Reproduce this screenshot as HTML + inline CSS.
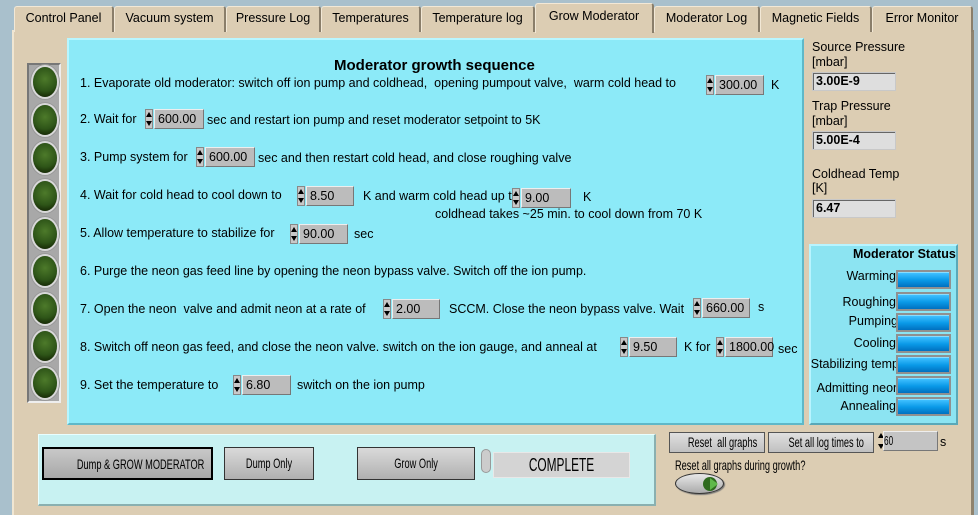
<!DOCTYPE html>
<html><head><meta charset="utf-8"><style>
*{margin:0;padding:0;box-sizing:border-box}
body{width:978px;height:515px;overflow:hidden;background:#a9c0cc;font-family:"Liberation Sans",sans-serif;font-size:12.5px;color:#000;position:relative}
.a{position:absolute;white-space:nowrap}
.tab{position:absolute;top:6px;height:26px;background:#dccdb3;border:1px solid #f2e8d6;border-right:2px solid #8a7e6a;border-bottom:none;border-radius:3px 3px 0 0;text-align:center;line-height:22px;font-size:12.5px}
.panel{position:absolute;left:12px;top:30px;width:962px;height:485px;background:#dccdb3;border-left:2px solid #f0e6d2;border-right:3px solid #8f836e}
.cy{position:absolute;left:67px;top:38px;width:737px;height:387px;background:#8ceaf8;border-top:2px solid #b8f6ff;border-left:2px solid #b8f6ff;border-right:2px solid #5fb8c8;border-bottom:2px solid #5fb8c8}
.num{position:absolute;height:20px}
.num .sp{position:absolute;left:0;top:0;width:8px;height:20px;background:#c8c8c8;border:1px solid #888}
.num .sp:before{content:"";position:absolute;left:0px;top:2px;border-left:3px solid transparent;border-right:3px solid transparent;border-bottom:5px solid #000}
.num .sp:after{content:"";position:absolute;left:0px;bottom:2px;border-left:3px solid transparent;border-right:3px solid transparent;border-top:5px solid #000}
.num .bx{position:absolute;left:9px;top:0;right:0;height:20px;background:#bcbcbc;border-top:1px solid #eee;border-left:1px solid #eee;border-right:1px solid #777;border-bottom:1px solid #777;padding-left:3px;line-height:18px}
.led{position:absolute;left:33px;width:24px;height:30px;border-radius:50%;background:radial-gradient(circle at 50% 40%,#4d7a2a 0%,#2e5518 55%,#1a3008 80%);box-shadow:0 0 0 2px #d8d8d8,0 0 0 3px #999}
.ind{position:absolute;left:896px;width:55px;height:19px;background:#909090;padding:2px}
.ind div{width:100%;height:100%;background:linear-gradient(#40c0ff,#0a9ae8 50%,#0070c0);border-top:1px solid #88ddff}
.lbl{position:absolute;right:82px;text-align:right;white-space:nowrap}
.n{display:inline-block;transform:scaleX(.66);transform-origin:center;white-space:nowrap}
.btn{position:absolute;top:447px;height:33px;background:linear-gradient(#dadada,#b0b0b0);border:1px solid #333;text-align:center;line-height:31px;font-size:14px;white-space:nowrap;overflow:hidden}
.rd{position:absolute;height:19px;background:#dedede;border:1px solid #c8c8c8;font-weight:bold;padding-left:3px;line-height:17px;font-size:12.5px;width:84px;box-shadow:inset 1px 1px 0 #666}
.sb{position:absolute;height:21px;background:linear-gradient(#e0e0e0,#c0c0c0);border:1px solid #555;font-size:14px;line-height:19px;text-align:center;white-space:nowrap;overflow:hidden}
</style></head><body>
<div class="panel"></div>
<div class="tab" style="left:14px;width:100px">Control Panel</div>
<div class="tab" style="left:114px;width:112px">Vacuum system</div>
<div class="tab" style="left:226px;width:95px">Pressure Log</div>
<div class="tab" style="left:321px;width:100px">Temperatures</div>
<div class="tab" style="left:421px;width:114px">Temperature log</div>
<div class="tab" style="left:535px;top:3px;height:30px;width:119px;line-height:24px;background:#dccdb3">Grow Moderator</div>
<div class="tab" style="left:654px;width:106px">Moderator Log</div>
<div class="tab" style="left:760px;width:112px">Magnetic Fields</div>
<div class="tab" style="left:872px;width:101px">Error Monitor</div>

<div class="a" style="left:27px;top:63px;width:34px;height:340px;background:#a8a8a8;border-top:2px solid #777;border-left:2px solid #777;border-right:2px solid #eee;border-bottom:2px solid #eee"></div>
<div class="led" style="top:67px"></div><div class="led" style="top:105px"></div><div class="led" style="top:143px"></div><div class="led" style="top:181px"></div><div class="led" style="top:219px"></div><div class="led" style="top:256px"></div><div class="led" style="top:294px"></div><div class="led" style="top:331px"></div><div class="led" style="top:368px"></div>

<div class="cy"></div>
<div class="a" style="left:334px;top:57px;font-weight:bold;font-size:15px">Moderator growth sequence</div>
<div class="a" style="left:80px;top:76px">1. Evaporate old moderator: switch off ion pump and coldhead,&nbsp; opening pumpout valve,&nbsp; warm cold head to</div>
<div class="num" style="left:706px;top:75px;width:58px"><div class="sp"></div><div class="bx">300.00</div></div>
<div class="a" style="left:771px;top:78px">K</div>
<div class="a" style="left:80px;top:112px">2. Wait for</div>
<div class="num" style="left:145px;top:109px;width:59px"><div class="sp"></div><div class="bx">600.00</div></div>
<div class="a" style="left:207px;top:113px">sec and restart ion pump and reset moderator setpoint to 5K</div>
<div class="a" style="left:80px;top:150px">3. Pump system for</div>
<div class="num" style="left:196px;top:147px;width:59px"><div class="sp"></div><div class="bx">600.00</div></div>
<div class="a" style="left:258px;top:151px">sec and then restart cold head, and close roughing valve</div>
<div class="a" style="left:80px;top:188px">4. Wait for cold head to cool down to</div>
<div class="num" style="left:297px;top:186px;width:57px"><div class="sp"></div><div class="bx">8.50</div></div>
<div class="a" style="left:363px;top:189px">K and warm cold head up to</div>
<div class="num" style="left:512px;top:188px;width:59px"><div class="sp"></div><div class="bx">9.00</div></div>
<div class="a" style="left:583px;top:190px">K</div>
<div class="a" style="left:435px;top:207px">coldhead takes ~25 min. to cool down from 70 K</div>
<div class="a" style="left:80px;top:226px">5. Allow temperature to stabilize for</div>
<div class="num" style="left:290px;top:224px;width:58px"><div class="sp"></div><div class="bx">90.00</div></div>
<div class="a" style="left:354px;top:227px">sec</div>
<div class="a" style="left:80px;top:264px">6. Purge the neon gas feed line by opening the neon bypass valve. Switch off the ion pump.</div>
<div class="a" style="left:80px;top:302px">7. Open the neon&nbsp; valve and admit neon at a rate of</div>
<div class="num" style="left:383px;top:299px;width:57px"><div class="sp"></div><div class="bx">2.00</div></div>
<div class="a" style="left:449px;top:302px">SCCM. Close the neon bypass valve. Wait</div>
<div class="num" style="left:693px;top:298px;width:57px"><div class="sp"></div><div class="bx">660.00</div></div>
<div class="a" style="left:758px;top:300px">s</div>
<div class="a" style="left:80px;top:340px">8. Switch off neon gas feed, and close the neon valve. switch on the ion gauge, and anneal at</div>
<div class="num" style="left:620px;top:337px;width:57px"><div class="sp"></div><div class="bx">9.50</div></div>
<div class="a" style="left:684px;top:340px">K for</div>
<div class="num" style="left:716px;top:337px;width:57px"><div class="sp"></div><div class="bx">1800.00</div></div>
<div class="a" style="left:778px;top:342px">sec</div>
<div class="a" style="left:80px;top:378px">9. Set the temperature to</div>
<div class="num" style="left:233px;top:375px;width:58px"><div class="sp"></div><div class="bx">6.80</div></div>
<div class="a" style="left:297px;top:378px">switch on the ion pump</div>

<div class="a" style="left:812px;top:40px">Source Pressure</div>
<div class="a" style="left:812px;top:55px">[mbar]</div>
<div class="rd" style="left:812px;top:72px">3.00E-9</div>
<div class="a" style="left:812px;top:99px">Trap Pressure</div>
<div class="a" style="left:812px;top:114px">[mbar]</div>
<div class="rd" style="left:812px;top:131px">5.00E-4</div>
<div class="a" style="left:812px;top:167px">Coldhead Temp</div>
<div class="a" style="left:812px;top:181px">[K]</div>
<div class="rd" style="left:812px;top:199px">6.47</div>

<div class="a" style="left:809px;top:244px;width:149px;height:181px;background:#8ce4f2;border:2px solid #b8f4ff;border-right-color:#5aa8b8;border-bottom-color:#5aa8b8"></div>
<div class="a" style="left:853px;top:247px;font-weight:bold">Moderator Status</div>
<div class="lbl" style="top:269px">Warming</div><div class="ind" style="top:270px"><div></div></div>
<div class="lbl" style="top:295px">Roughing</div><div class="ind" style="top:292px"><div></div></div>
<div class="lbl" style="top:314px;right:80px">Pumping</div><div class="ind" style="top:313px"><div></div></div>
<div class="lbl" style="top:336px">Cooling</div><div class="ind" style="top:334px"><div></div></div>
<div class="lbl" style="top:357px;right:79px">Stabilizing temp</div><div class="ind" style="top:355px"><div></div></div>
<div class="lbl" style="top:381px;right:78px">Admitting neon</div><div class="ind" style="top:376px"><div></div></div>
<div class="lbl" style="top:399px">Annealing</div><div class="ind" style="top:397px"><div></div></div>

<div class="a" style="left:38px;top:434px;width:618px;height:72px;background:#c8f2f2;border:1px solid #e8ffff;border-right:2px solid #8ab0b0;border-bottom:2px solid #8ab0b0"></div>
<div class="btn" style="left:42px;width:171px;border:2px solid #000;background:linear-gradient(#c8c8c8,#a8a8a8)"><span class="n">Dump &amp; GROW MODERATOR</span></div>
<div class="btn" style="left:224px;width:90px"><span class="n">Dump Only</span></div>
<div class="btn" style="left:357px;width:118px"><span class="n">Grow Only</span></div>
<div class="a" style="left:481px;top:449px;width:10px;height:24px;border-radius:5px;background:#ccc;border:1px solid #999"></div>
<div class="a" style="left:493px;top:452px;width:137px;height:26px;background:#d4d4d4;border:1px solid #e8e8e8;font-size:18px;text-align:center;line-height:24px"><span class="n">COMPLETE</span></div>

<div class="sb" style="left:669px;top:432px;width:96px"><span class="n">Reset&nbsp; all graphs</span></div>
<div class="sb" style="left:768px;top:432px;width:106px"><span class="n">Set all log times to</span></div>
<div class="num" style="left:878px;top:431px;width:60px"><div class="sp" style="width:6px;background:none;border:none"></div><div class="bx" style="left:5px;background:#c4c4c4;padding-left:0"><span class="n" style="transform-origin:left">60</span></div></div>
<div class="a" style="left:940px;top:435px">s</div>
<div class="a" style="left:675px;top:457px;font-size:14px;width:120px"><span class="n" style="transform-origin:left">Reset all graphs during growth?</span></div>
<div class="a" style="left:675px;top:473px;width:49px;height:21px;border-radius:50%;background:linear-gradient(#e8e8e8,#aaa);border:1px solid #333;box-shadow:1px 1px 1px #777"></div>
<div class="a" style="left:703px;top:477px;width:14px;height:14px;border-radius:50%;background:#2f6a1e"></div>
<div class="a" style="left:710px;top:478px;border-top:6px solid transparent;border-bottom:6px solid transparent;border-left:8px solid #5fb94a"></div>
</body></html>
